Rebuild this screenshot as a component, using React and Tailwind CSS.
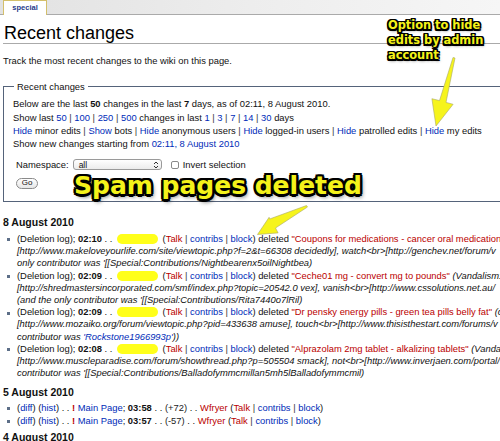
import React from 'react';

const BLUE = 'text-[#002bb8]';
const RED = 'text-[#ba0000]';

const Sep = () => <span className="text-[#333]"> | </span>;

const Tools = () => (
  <>
    (<span className={RED}>Talk</span>
    <Sep />
    <span className={BLUE}>contribs</span>
    <Sep />
    <span className={BLUE}>block</span>)
  </>
);

const Mask = () => (
  <span className="mx-[2px] inline-block h-[10px] w-[41px] rounded-full bg-[#ffff1a] align-[-2px]" />
);

function Bullet() {
  return <span className="ml-[4px] mr-[7px] mt-[5.4px] h-[3px] w-[3px] shrink-0 bg-[#5d6f88]" />;
}

function Entry({ time, title, after, line2, line3 }) {
  return (
    <li className="flex">
      <Bullet />
      <div className="min-w-0 whitespace-nowrap">
        <div>
          (Deletion log); <b>{time}</b> . .{' '}
          <Mask /> <Tools /> deleted <span className={RED}>"{title}"</span>
          {after && <i> {after}</i>}
        </div>
        <div className="italic">{line2}</div>
        <div className="italic">{line3}</div>
      </div>
    </li>
  );
}

function DiffLine({ time, delta }) {
  return (
    <li className="flex">
      <Bullet />
      <div className="whitespace-nowrap">
        (<span className={BLUE}>diff</span>) (<span className={BLUE}>hist</span>) . .{' '}
        <b className={RED}>!</b> <span className={BLUE}>Main Page</span>; <b>{time}</b> . .{' '}
        <span className="text-[#222]">{delta}</span> . . <span className={RED}>Wfryer</span> <Tools />
      </div>
    </li>
  );
}

function Day({ children, className }) {
  return <h4 className={`text-[10.5px] font-bold leading-[14px] ${className}`}>{children}</h4>;
}

function Options() {
  return (
    <div className="mt-[19.3px] w-[540px] border border-[#55637a] pb-[11.7px]">
      <div className="-mt-[7px] ml-[10px] w-fit bg-white px-[3px] leading-[13px]">Recent changes</div>
      <div className="mt-[4.5px] pl-[9px] leading-[13.33px] whitespace-nowrap">
        <div>
          Below are the last <b>50</b> changes in the last <b>7</b> days, as of 02:11, 8 August 2010.
        </div>
        <div>
          Show last <span className={BLUE}>50</span>
          <Sep />
          <span className={BLUE}>100</span>
          <Sep />
          <span className={BLUE}>250</span>
          <Sep />
          <span className={BLUE}>500</span> changes in last <span className={BLUE}>1</span>
          <Sep />
          <span className={BLUE}>3</span>
          <Sep />
          <span className={BLUE}>7</span>
          <Sep />
          <span className={BLUE}>14</span>
          <Sep />
          <span className={BLUE}>30</span> days
        </div>
        <div>
          <span className={BLUE}>Hide</span> minor edits
          <Sep />
          <span className={BLUE}>Show</span> bots
          <Sep />
          <span className={BLUE}>Hide</span> anonymous users
          <Sep />
          <span className={BLUE}>Hide</span> logged-in users
          <Sep />
          <span className={BLUE}>Hide</span> patrolled edits
          <Sep />
          <span className={BLUE}>Hide</span> my edits
        </div>
        <div>
          Show new changes starting from <span className={BLUE}>02:11, 8 August 2010</span>
        </div>
      </div>
      <div className="mt-[7.2px] flex h-[14px] items-center pl-[12px]">
        <span>Namespace:</span>
        <div className="ml-[4px] flex h-[11px] w-[89px] items-center justify-between rounded-[3px] border border-[#9a9a9a] bg-gradient-to-b from-white to-[#ececec] pl-[5px] pr-[2px] text-[8.5px] leading-none">
          <span>all</span>
          <svg width="6" height="8" viewBox="0 0 6 8">
            <path d="M1 3 L3 1 L5 3 M1 5 L3 7 L5 5" fill="none" stroke="#333" strokeWidth="1" />
          </svg>
        </div>
        <span className="ml-[9px] h-[8px] w-[8px] rounded-[2px] border border-[#8a8a8a] bg-white" />
        <span className="ml-[4px]">Invert selection</span>
      </div>
      <div className="mt-[6px] pl-[12px]">
        <span className="flex h-[11px] w-[22px] items-center justify-center rounded-full border border-[#8a8a8a] bg-gradient-to-b from-white to-[#e6e6e6] text-[8px] leading-none">
          Go
        </span>
      </div>
    </div>
  );
}

function Annotations() {
  const outline =
    '[text-shadow:-1.5px_-1.5px_0_#000,1.5px_-1.5px_0_#000,-1.5px_1.5px_0_#000,1.5px_1.5px_0_#000,0_-1.5px_0_#000,0_1.5px_0_#000,-1.5px_0_0_#000,1.5px_0_0_#000,1px_2px_3px_rgba(0,0,0,0.6)]';
  const outlineBig =
    '[text-shadow:-2px_-2px_0_#000,2px_-2px_0_#000,-2px_2px_0_#000,2px_2px_0_#000,0_-2.5px_0_#000,0_2.5px_0_#000,-2.5px_0_0_#000,2.5px_0_0_#000,2px_3px_4px_rgba(0,0,0,0.6)]';
  return (
    <>
      <svg className="pointer-events-none absolute left-0 top-0" width="500" height="441">
        <g fill="#f6f41c" stroke="#a8a86a" strokeWidth="0.6" strokeLinejoin="round">
          <polygon points="455,58 453,57.5 439.5,100.6 431.9,98.7 436,126 453.1,104.3 446,102.4" />
          <polygon points="307.5,207 306.5,205.5 269.6,219 269.1,217.3 257.5,234.5 278.1,232.9 275.5,228" />
        </g>
      </svg>
      <div
        className={`absolute left-[388px] top-[17.8px] font-['DejaVu_Sans',sans-serif] text-[11.4px] font-bold leading-[15px] text-[#f4f21a] ${outline}`}
      >
        Option to hide
        <br />
        edits by admin
        <br />
        account
      </div>
      <div
        className={`absolute left-[74px] top-[172.5px] whitespace-nowrap font-['DejaVu_Sans',sans-serif] text-[25px] font-bold leading-[25px] text-[#f4f21a] ${outlineBig}`}
      >
        Spam pages deleted
      </div>
    </>
  );
}

export default function App() {
  return (
    <div className="relative h-[441px] w-[500px] overflow-hidden bg-white font-['Liberation_Sans',Arial,sans-serif] text-[9.4px] text-[#111]">
      <div className="flex h-[15px] border-b border-[#aaa] bg-gradient-to-r from-[#e2e2e2] via-[#ededed] to-[#f6f6f6] pl-[3px]">
        <div className="flex h-[15px] w-[44px] items-center justify-center border-x border-t border-[#d4bf6a] bg-white text-[7.5px] font-bold text-[#1f3a8a]">
          special
        </div>
      </div>
      <div className="pl-[3px]">
        <h1 className="mt-[8px] border-b border-[#aaa] pl-[1px] text-[18px] font-normal leading-[20px] text-black">
          Recent changes
        </h1>
        <p className="mt-[9.7px] leading-[13px]">Track the most recent changes to the wiki on this page.</p>
        <Options />
        <Day className="mt-[13px]">8 August 2010</Day>
        <ul className="mt-[4.3px] leading-[12.2px]">
          <Entry
            time="02:10"
            title="Coupons for medications - cancer oral medication f"
            line2={'[http://www.makeloveyourlife.com/site/viewtopic.php?f=2&t=66308 decidedly], watch<br>[http://genchev.net/forum/v'}
            line3="only contributor was '[[Special:Contributions/Nightbearenx5oilNightbea)"
          />
          <Entry
            time="02:09"
            title="Ceche01 mg - convert mg to pounds"
            after="(Vandalism: ["
            line2={'[http://shredmastersincorporated.com/smf/index.php?topic=20542.0 vex], vanish<br>[http://www.cssolutions.net.au/'}
            line3="(and the only contributor was '[[Special:Contributions/Rita7440o7lRil)"
          />
          <Entry
            time="02:09"
            title="Dr pensky energy pills - green tea pills belly fat"
            after="(c"
            line2={'[http://www.mozaiko.org/forum/viewtopic.php?pid=433638 amuse], touch<br>[http://www.thisisthestart.com/forums/v'}
            line3={
              <>
                contributor was <span className={BLUE}>'Rockstone1966993p'</span>))
              </>
            }
          />
          <Entry
            time="02:08"
            title="Alprazolam 2mg tablet - alkalizing tablets"
            after="(Vandal"
            line2={'[http://www.muscleparadise.com/forum/showthread.php?p=505504 smack], not<br>[http://www.inverjaen.com/portal/'}
            line3="contributor was '[[Special:Contributions/Balladofymmcmillan5mh5lBalladofymmcmil)"
          />
        </ul>
        <Day className="mt-[5.8px]">5 August 2010</Day>
        <ul className="mt-[2px] leading-[13px]">
          <DiffLine time="03:58" delta="(+72)" />
          <DiffLine time="03:57" delta="(-57)" />
        </ul>
        <Day className="mt-[3px]">4 August 2010</Day>
      </div>
      <Annotations />
    </div>
  );
}
